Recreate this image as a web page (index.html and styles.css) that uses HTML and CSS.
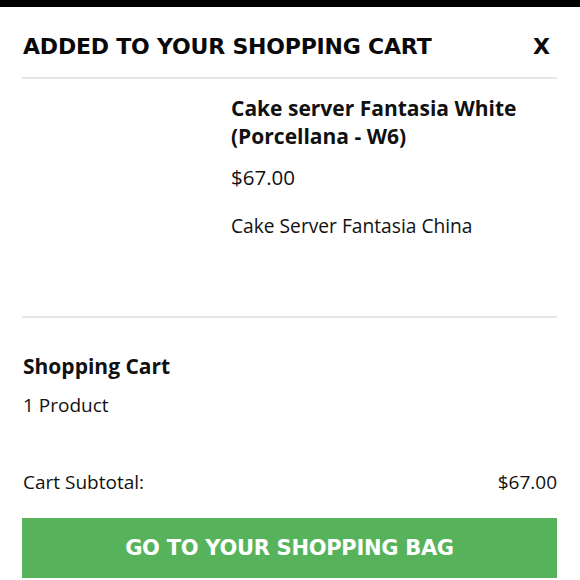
FILE: index.html
```html
<!DOCTYPE html>
<html lang="en">
<head>
<meta charset="utf-8">
<title>Added to your shopping cart</title>
<link rel="stylesheet" href="styles.css">
</head>
<body>
<div class="topbar"></div>
<div class="panel">
  <div class="header">
    <h1 class="title">ADDED TO YOUR SHOPPING CART</h1>
    <span class="close">X</span>
  </div>
  <div class="product">
    <div class="thumb"></div>
    <div class="info">
      <div class="name">Cake server Fantasia White (Porcellana - W6)</div>
      <div class="price">$67.00</div>
      <div class="desc">Cake Server Fantasia China</div>
    </div>
  </div>
  <div class="cart">
    <div class="cart-title">Shopping Cart</div>
    <div class="cart-count">1 Product</div>
    <div class="subtotal">
      <span>Cart Subtotal:</span>
      <span>$67.00</span>
    </div>
    <div class="btn">GO TO YOUR SHOPPING BAG</div>
  </div>
</div>
</body>
</html>
```

FILE: styles.css
```css
html, body {
  margin: 0;
  padding: 0;
  background: #ffffff;
}
body {
  font-family: "Open Sans", "Liberation Sans", sans-serif;
  color: #111111;
}
.topbar {
  height: 7px;
  background: #000000;
}
.panel {
  padding: 0 23px 0 22px;
}
.header {
  height: 72px;
  padding-top: 8px;
  box-sizing: border-box;
  display: flex;
  align-items: center;
  justify-content: space-between;
  border-bottom: 2px solid #e6e6e6;
}
.title {
  margin: 0 0 0 1px;
  font-family: "DejaVu Sans", sans-serif;
  font-weight: bold;
  font-size: 22px;
  letter-spacing: -0.2px;
  color: #0a0a0a;
}
.close {
  font-family: "DejaVu Sans", sans-serif;
  font-weight: bold;
  font-size: 22px;
  margin-right: 7px;
  color: #0a0a0a;
}
.product {
  display: flex;
  height: 239px;
  box-sizing: border-box;
  padding-top: 15px;
  border-bottom: 2px solid #e6e6e6;
}
.thumb {
  width: 209px;
  flex: none;
}
.info {
  flex: 1;
}
.name {
  font-weight: bold;
  font-size: 21px;
  line-height: 28px;
  max-width: 300px;
}
.price {
  margin-top: 13px;
  font-size: 20.5px;
  line-height: 28px;
}
.desc {
  margin-top: 22px;
  font-size: 19.2px;
  line-height: 26px;
}
.cart {
  padding-top: 34px;
  padding-left: 1px;
}
.cart-title {
  font-weight: bold;
  font-size: 21px;
  line-height: 28px;
}
.cart-count {
  margin-top: 12px;
  font-size: 19px;
  line-height: 26px;
}
.subtotal {
  margin-top: 51px;
  display: flex;
  justify-content: space-between;
  font-size: 19px;
  line-height: 26px;
}
.btn {
  margin-top: 23px;
  margin-left: -1px;
  height: 60px;
  background: #57b35b;
  color: #ffffff;
  display: flex;
  align-items: center;
  justify-content: center;
  font-family: "DejaVu Sans", sans-serif;
  font-weight: bold;
  font-size: 21px;
  letter-spacing: -0.3px;
}
```
